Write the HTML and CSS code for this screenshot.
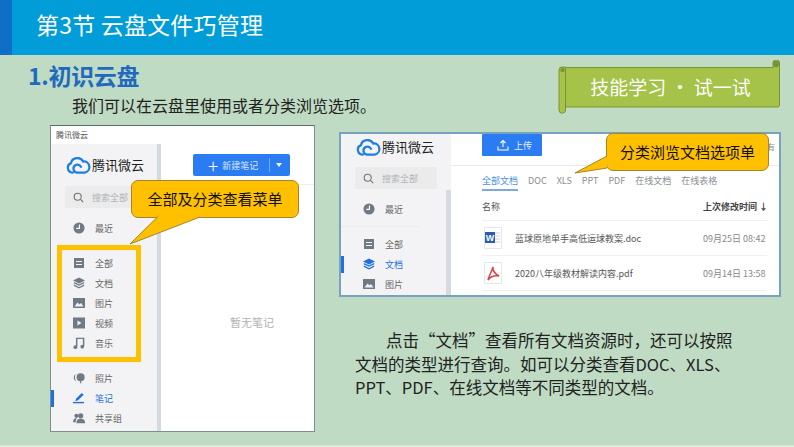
FILE: index.html
```html
<!DOCTYPE html>
<html lang="zh-CN">
<head>
    <meta charset="UTF-8">
    <title>第3节 云盘文件巧管理</title>
    <link rel="stylesheet" href="styles.css">
</head>
<body>
    <svg class="icon-defs" aria-hidden="true">
        <symbol id="i-logo" viewBox="0 0 26 18">
            <path d="M7 16.500H6.500a5.200 5.200 0 0 1-1.500-10A7 7 0 0 1 18 4.800a5.900 5.900 0 0 1 1.500 11.700H12a4.200 4.200 0 1 1 3.600-6.200" fill="none" stroke="#1f7fe0" stroke-width="2.400" stroke-linecap="round"/>
        </symbol>
        <symbol id="i-search" viewBox="0 0 14 14">
            <circle cx="6" cy="6" r="4.500" fill="none" stroke="#6b7178" stroke-width="1.400"/>
            <path d="M9.500 9.500l3.500 3.500" stroke="#6b7178" stroke-width="1.400"/>
        </symbol>
        <symbol id="i-clock" viewBox="0 0 14 14">
            <circle cx="7" cy="7" r="6.500" fill="#6f7a84"/>
            <path d="M7.500 3v4.500H3.800" fill="none" stroke="#fff" stroke-width="1.300"/>
        </symbol>
        <symbol id="i-all" viewBox="0 0 12 12">
            <path d="M1 1h10v10H1z" fill="#6f7a84"/>
            <path d="M3 4.500h6M3 7.500h6" stroke="#f3f3f5" stroke-width="1.200"/>
        </symbol>
        <symbol id="i-stack" viewBox="0 0 14 13">
            <path d="M7 0l7 3.500L7 7 0 3.500z" fill="currentColor"/>
            <path d="M1 6l6 3 6-3M1 9l6 3 6-3" fill="none" stroke="currentColor" stroke-width="1.500"/>
        </symbol>
        <symbol id="i-image" viewBox="0 0 12 10">
            <path d="M0 0h12v10H0z" fill="#6f7a84"/>
            <path d="M1.500 8.500l3-4 2 2 1.500-1.500 2.500 3.500z" fill="#f3f3f5"/>
        </symbol>
        <symbol id="i-video" viewBox="0 0 12 11">
            <path d="M0 0h12v11H0z" fill="#6f7a84"/>
            <path d="M4.500 3l4 2.500-4 2.500z" fill="#f3f3f5"/>
        </symbol>
        <symbol id="i-music" viewBox="0 0 12 13">
            <path d="M3.500 11V1.500h7.500V10" fill="none" stroke="#6f7a84" stroke-width="1.600"/>
            <circle cx="2" cy="11" r="2" fill="#6f7a84"/>
            <circle cx="9.500" cy="10.500" r="2" fill="#6f7a84"/>
        </symbol>
        <symbol id="i-photo" viewBox="0 0 15 13">
            <circle cx="9.500" cy="5.500" r="5" fill="#6f7a84"/>
            <path d="M9 10h1l.5 3h-2z" fill="#6f7a84"/>
            <path d="M3.500 1.500A5 5 0 0 0 4 10.500 9 9 0 0 1 3.500 1.500z" fill="#6f7a84"/>
        </symbol>
        <symbol id="i-pen" viewBox="0 0 13 12">
            <path d="M9.500 0.500l2 2-6 6-3 1 1-3z" fill="#1f6fdc"/>
            <path d="M0 11h12" stroke="#1f6fdc" stroke-width="1.500"/>
        </symbol>
        <symbol id="i-team" viewBox="0 0 14 12">
            <circle cx="9" cy="3.500" r="3" fill="#6f7a84"/>
            <path d="M4 12c0-4 2-5 5-5s5 1 5 5z" fill="#6f7a84"/>
            <circle cx="4" cy="3.500" r="2.500" fill="#6f7a84"/>
            <path d="M0 11c0-3 1.500-5 4-5l-1 5z" fill="#6f7a84"/>
        </symbol>
    </svg>

    <div class="slide">
        <header class="topbar">
            <div class="topbar-strip"></div>
            <h1>第3节 云盘文件巧管理</h1>
        </header>

        <main class="content">
            <div class="intro-row">
                <div class="intro">
                    <h2>1.初识云盘</h2>
                    <p>我们可以在云盘里使用或者分类浏览选项。</p>
                </div>
                <div class="scroll-banner">
                    <svg class="scroll-shape" viewBox="0 0 223 54" aria-hidden="true">
                        <path d="M7.500 7.500H215V3a3 3 0 0 1 6.500 0V45a2 2 0 0 1-2 2H7.500z" fill="#a5c249" stroke="#789433" stroke-width="1"/>
                        <path d="M1 10a3 3 0 0 1 3-3H7.500V50a3.200 3.200 0 0 1-6.500 0z" fill="#a5c249" stroke="#789433" stroke-width="1"/>
                        <circle cx="4.500" cy="10" r="2.200" fill="#789433"/>
                        <circle cx="218" cy="4" r="3.200" fill="#789433"/>
                    </svg>
                    <span class="scroll-text">技能学习 · 试一试</span>
                </div>
            </div>

            <div class="columns">
                <section class="shot shot-notes">
                    <div class="shot-title">腾讯微云</div>
                    <div class="shot-body">
                        <aside class="side">
                            <div class="logo"><svg class="logo-mark"><use href="#i-logo"/></svg><span>腾讯微云</span></div>
                            <div class="search"><svg class="ico"><use href="#i-search"/></svg><span>搜索全部</span></div>
                            <div class="nav-item nav-recent"><svg class="ico"><use href="#i-clock"/></svg>最近</div>
                            <div class="nav-group">
                                <div class="nav-item"><svg class="ico"><use href="#i-all"/></svg>全部</div>
                                <div class="nav-item"><svg class="ico ico-grey"><use href="#i-stack"/></svg>文档</div>
                                <div class="nav-item"><svg class="ico"><use href="#i-image"/></svg>图片</div>
                                <div class="nav-item"><svg class="ico"><use href="#i-video"/></svg>视频</div>
                                <div class="nav-item"><svg class="ico"><use href="#i-music"/></svg>音乐</div>
                            </div>
                            <div class="nav-group nav-lower">
                                <div class="nav-item"><svg class="ico"><use href="#i-photo"/></svg>照片</div>
                                <div class="nav-item active"><svg class="ico"><use href="#i-pen"/></svg>笔记</div>
                                <div class="nav-item"><svg class="ico"><use href="#i-team"/></svg>共享组</div>
                            </div>
                        </aside>
                        <div class="notes-main">
                            <div class="notes-top">
                                <div class="new-note"><span class="plus">+</span><span>新建笔记</span><span class="caret-box"><i class="caret"></i></span></div>
                            </div>
                            <div class="notes-empty">暂无笔记</div>
                        </div>
                    </div>
                    <div class="menu-outline"></div>
                    <div class="callout callout-notes">全部及分类查看菜单
                        <svg class="tail" viewBox="0 0 72 30" aria-hidden="true">
                            <path d="M29 0L1 28 71 1" fill="#ffc000"/>
                            <path d="M29 .5L1 28 71 1" fill="none" stroke="#a5852b"/>
                        </svg>
                    </div>
                </section>

                <div class="right-col">
                    <section class="shot shot-docs">
                        <aside class="side">
                            <div class="logo"><svg class="logo-mark"><use href="#i-logo"/></svg><span>腾讯微云</span></div>
                            <div class="search"><svg class="ico"><use href="#i-search"/></svg><span>搜索全部</span></div>
                            <div class="nav-item nav-recent"><svg class="ico"><use href="#i-clock"/></svg>最近</div>
                            <div class="nav-group">
                                <div class="nav-item"><svg class="ico"><use href="#i-all"/></svg>全部</div>
                                <div class="nav-item active"><svg class="ico ico-blue"><use href="#i-stack"/></svg>文档</div>
                                <div class="nav-item"><svg class="ico"><use href="#i-image"/></svg>图片</div>
                            </div>
                        </aside>
                        <div class="docs-main">
                            <div class="docs-top">
                                <div class="upload">
                                    <svg class="upload-ico" viewBox="0 0 12 12"><path d="M6 8V1.500M3.500 4L6 1.500 8.500 4M1 7.500V11h10V7.500" fill="none" stroke="#fff" stroke-width="1.100"/></svg>
                                    上传
                                </div>
                                <span class="top-more">有</span>
                            </div>
                            <div class="tabs">
                                <span class="tab current">全部文档</span>
                                <span class="tab">DOC</span>
                                <span class="tab">XLS</span>
                                <span class="tab">PPT</span>
                                <span class="tab">PDF</span>
                                <span class="tab">在线文档</span>
                                <span class="tab">在线表格</span>
                            </div>
                            <div class="row row-head"><span class="name">名称</span><span class="when">上次修改时间 ↓</span></div>
                            <div class="row">
                                <span class="file-ico"><svg viewBox="0 0 18 22"><path d="M.5.5h17v21H.5z" fill="#fff" stroke="#e4e6e9"/><path d="M10 6h6M10 9h6M10 12h6M10 15h6" stroke="#c9d3e0"/><path d="M1 5h10v11H1z" fill="#2a5db0"/><text class="file-w" x="6" y="14">W</text></svg></span>
                                <span class="name">蓝球原地单手高低运球教案.doc</span><span class="when">09月25日 08:42</span>
                            </div>
                            <div class="row">
                                <span class="file-ico"><svg viewBox="0 0 18 22"><path d="M.5.5h17v21H.5z" fill="#fff" stroke="#e4e6e9"/><path d="M9 5c-.5 3 .5 6 6 9-4-.5-8 0-11 4 1-4 3-7 5-13z" fill="none" stroke="#e0414a" stroke-width="1.500"/></svg></span>
                                <span class="name">2020八年级教材解读内容.pdf</span><span class="when">09月14日 13:58</span>
                            </div>
                        </div>
                        <div class="callout callout-docs">分类浏览文档选项单
                            <svg class="tail" viewBox="0 0 34 20" aria-hidden="true">
                                <path d="M33 1L1 18 33 13" fill="#ffc000"/>
                                <path d="M33 1L1 18 33 13" fill="none" stroke="#a5852b"/>
                            </svg>
                        </div>
                    </section>

                    <p class="note">点击“文档”查看所有文档资源时，还可以按照文档的类型进行查询。如可以分类查看DOC、XLS、PPT、PDF、在线文档等不同类型的文档。</p>
                </div>
            </div>
        </main>
    </div>
</body>
</html>
```

FILE: styles.css
```css
body {
    margin: 0;
    font-family: "Noto Sans CJK SC", "Liberation Sans", sans-serif;
    color: #1a1a1a;
    background-color: #bfdbc3;
}
.icon-defs {
    display: none;
}
.slide {
    box-sizing: border-box;
    width: 794px;
    height: 447px;
    overflow: hidden;
    background-color: #bfdbc3;
    border-bottom: 2px solid #d9eadb;
}

/* top bar */
.topbar {
    display: flex;
    align-items: center;
    height: 55px;
    background-color: #009dd9;
}
.topbar-strip {
    width: 12px;
    height: 100%;
    background-color: #0f6fc6;
}
.topbar h1 {
    margin: 0 0 0 24px;
    font-size: 23px;
    line-height: 32px;
    font-weight: 400;
    letter-spacing: .2px;
    color: #fff;
    padding-bottom: 7px;
}

/* intro and banner */
.content {
    padding: 4px 13px 0 29px;
}
.intro-row {
    display: flex;
    justify-content: space-between;
    height: 66px;
}
.intro h2 {
    margin: 0 0 0 -1px;
    font-size: 23px;
    line-height: 32px;
    letter-spacing: -.3px;
    color: #1f6abf;
}
.intro p {
    margin: 2px 0 0 43px;
    font-size: 16px;
    line-height: 24px;
    color: #222;
}
.scroll-banner {
    position: relative;
    display: flex;
    align-items: center;
    justify-content: center;
    width: 223px;
    height: 54px;
    margin-top: 1px;
}
.scroll-shape {
    position: absolute;
    left: 0;
    top: 0;
    width: 223px;
    height: 54px;
}
.scroll-text {
    position: relative;
    margin: 0 0 0 2px;
    font-size: 19px;
    line-height: 26px;
    color: #fff;
}

/* columns */
.columns {
    display: flex;
    gap: 24px;
    align-items: flex-start;
    margin-left: 21px;
}
.right-col {
    width: 442px;
    padding-top: 7px;
}
.shot {
    position: relative;
    box-sizing: border-box;
    background-color: #fff;
}
.shot-notes {
    width: 265px;
    height: 307px;
    border: 1px solid #7d9186;
    border-top-color: #5c6b63;
}
.shot-docs {
    display: flex;
    height: 165px;
    border: 2px solid #78a3bf;
}
.shot-title {
    height: 18px;
    padding-left: 5px;
    font-size: 8px;
    line-height: 17px;
    color: #555;
    background-color: #fff;
}
.shot-body {
    display: flex;
    height: 287px;
}

/* sidebars */
.side {
    box-sizing: border-box;
    flex: none;
    background-color: #f3f3f5;
    border-right: 4px solid #d5dae0;
}
.shot-notes .side {
    width: 110px;
    padding-top: 11px;
}
.shot-docs .side {
    position: relative;
    width: 110px;
    padding-top: 3px;
    border-right: none;
}
.shot-docs .side::after {
    content: "";
    position: absolute;
    right: 0;
    top: 56px;
    bottom: 0;
    width: 5px;
    background-color: #d5dae0;
}
.logo {
    display: flex;
    align-items: center;
    height: 20px;
    padding-left: 15px;
    font-size: 13px;
    line-height: 20px;
    color: #222;
}
.logo-mark {
    width: 25px;
    height: 17px;
    margin-right: 1px;
}
.search {
    display: flex;
    align-items: center;
    box-sizing: border-box;
    width: 82px;
    height: 22px;
    margin: 11px 0 0 14px;
    padding-left: 8px;
    font-size: 9px;
    color: #b0b3b7;
    background-color: #ebebeb;
}
.search .ico {
    width: 11px;
    height: 11px;
    margin-right: 8px;
}
.shot-docs .search {
    margin-top: 10px;
}
.nav-item {
    position: relative;
    display: flex;
    align-items: center;
    height: 20px;
    padding-left: 22px;
    font-size: 9px;
    color: #666;
}
.nav-item .ico {
    flex: none;
    width: 12px;
    height: 12px;
    margin-right: 10px;
}
.ico-grey {
    color: #6f7a84;
}
.ico-blue {
    color: #1f6fdc;
}
.nav-item.active {
    color: #1f6fdc;
}
.nav-item.active::before {
    content: "";
    position: absolute;
    left: 0;
    top: 2px;
    width: 3px;
    height: 17px;
    background-color: #1f6fdc;
}
.nav-recent {
    margin-top: 10px;
}
.shot-notes .nav-group {
    margin-top: 15px;
}
.shot-notes .nav-lower {
    margin-top: 15px;
}
.shot-docs .nav-recent {
    margin-top: 10px;
}
.shot-docs .nav-group {
    width: 78px;
    margin-top: 7px;
    padding-top: 7px;
    border-top: 1px solid #e9eaec;
}
.shot-docs .nav-group .nav-item {
    width: 110px;
}

/* notes pane */
.notes-main {
    flex: 1;
    display: flex;
    flex-direction: column;
}
.notes-top {
    height: 41px;
    padding: 10px 0 0 32px;
    box-sizing: border-box;
    border-bottom: 1px solid #eee;
}
.new-note {
    display: flex;
    align-items: center;
    width: 97px;
    height: 22px;
    font-size: 9px;
    color: #dbe8ff;
    background-color: #2b7cf2;
    border-radius: 2px;
}
.plus {
    margin: 0 4px 0 15px;
    font-size: 19px;
    font-weight: 300;
    line-height: 22px;
    color: #fff;
}
.caret-box {
    display: flex;
    justify-content: center;
    align-items: center;
    height: 14px;
    margin-left: 11px;
    padding-left: 6px;
    border-left: 1px solid #79aaf6;
}
.caret {
    width: 0;
    height: 0;
    border: 3px solid transparent;
    border-top: 4px solid #fff;
    border-bottom: none;
}
.notes-empty {
    margin: 129px 0 0 69px;
    font-size: 11px;
    color: #b3b3b3;
}

/* documents pane */
.docs-main {
    flex: 1;
    min-width: 0;
}
.docs-top {
    display: flex;
    justify-content: space-between;
    height: 31px;
    padding: 0 4px 0 31px;
    border-bottom: 1px solid #e9eaec;
}
.upload {
    display: flex;
    align-items: center;
    box-sizing: border-box;
    width: 60px;
    height: 22px;
    padding-left: 15px;
    font-size: 9px;
    color: #e3eeff;
    background-color: #2b7cf2;
    border-radius: 1px;
}
.upload-ico {
    width: 12px;
    height: 12px;
    margin-right: 5px;
}
.top-more {
    margin-top: 7px;
    font-size: 8px;
    line-height: 12px;
    color: #888;
}
.tabs {
    display: flex;
    gap: 10px;
    height: 23px;
    padding-left: 31px;
    font-size: 9px;
    line-height: 29px;
    color: #8a8e93;
}
.tab.current {
    height: 23px;
    color: #4c8fe0;
    border-bottom: 2px solid #7fa9d6;
}
.row {
    position: relative;
    display: flex;
    align-items: center;
    height: 34px;
    margin: 0 12px 0 31px;
    font-size: 9px;
    color: #555;
    border-bottom: 1px solid #eef0f2;
}
.row-head {
    box-sizing: border-box;
    height: 32px;
    padding-top: 4px;
}
.row .name {
    flex: 1;
}
.row .when {
    flex: none;
    width: 64px;
    color: #888;
    white-space: nowrap;
}
.row-head .when {
    font-weight: bold;
    color: #444;
}
.file-ico {
    width: 18px;
    height: 22px;
    margin: 0 13px 0 2px;
}
.file-ico svg {
    display: block;
    width: 18px;
    height: 22px;
}
.file-w {
    font-family: "Liberation Sans", sans-serif;
    font-size: 9px;
    font-weight: bold;
    fill: #fff;
    text-anchor: middle;
}

/* callouts */
.menu-outline {
    position: absolute;
    left: 6px;
    top: 119px;
    box-sizing: border-box;
    width: 84px;
    height: 117px;
    border: 5px solid #ffc000;
}
.callout {
    position: absolute;
    box-sizing: border-box;
    width: 168px;
    height: 38px;
    font-size: 15px;
    line-height: 35px;
    text-align: center;
    color: #111;
    background-color: #ffc000;
    border: 1px solid #a5852b;
    border-radius: 7px;
}
.tail {
    position: absolute;
}
.callout-notes {
    left: 80px;
    top: 54px;
}
.callout-notes .tail {
    left: -3px;
    top: 35px;
    width: 72px;
    height: 30px;
}
.callout-docs {
    left: 265px;
    top: -1px;
    width: 163px;
}
.callout-docs .tail {
    left: -33px;
    top: 21px;
    width: 34px;
    height: 20px;
}

/* paragraph under the screenshot */
.note {
    margin: 32px 0 0 16px;
    width: 390px;
    font-size: 16.500px;
    line-height: 23.500px;
    text-indent: 31px;
    color: #222;
}
```
